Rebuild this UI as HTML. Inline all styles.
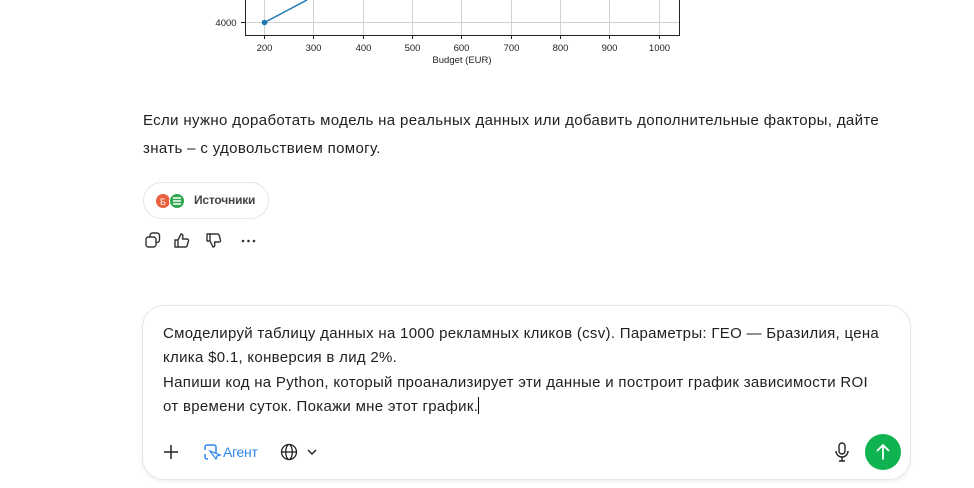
<!DOCTYPE html>
<html><head><meta charset="utf-8"><style>
body{margin:0;width:974px;height:488px;background:#fff;font-family:"Liberation Sans",sans-serif;color:#1f1f1f;position:relative;overflow:hidden}
.abs{position:absolute}
p.t{position:absolute;left:143px;top:107px;width:800px;margin:0;font-size:15px;line-height:28px;letter-spacing:0.35px;white-space:nowrap}
.src{position:absolute;left:143px;top:182px;width:126px;height:37px;border:1px solid #e6e6e6;border-radius:19px;box-sizing:border-box}
.box{position:absolute;left:142px;top:305px;width:769px;height:175px;border:1px solid #e5e5e5;border-radius:22px;box-sizing:border-box;box-shadow:0 2px 4px rgba(0,0,0,.06)}
.q{position:absolute;left:163px;top:322px;width:760px;font-size:15px;line-height:24.3px;letter-spacing:0.3px;margin:0;white-space:nowrap}
</style></head><body>
<svg class="abs" style="left:0;top:0" width="974" height="70">
<g stroke="#d0d0d0" stroke-width="1">
<line x1="264.5" y1="0" x2="264.5" y2="35"/><line x1="313.5" y1="0" x2="313.5" y2="35"/><line x1="363.5" y1="0" x2="363.5" y2="35"/><line x1="412.5" y1="0" x2="412.5" y2="35"/><line x1="461.5" y1="0" x2="461.5" y2="35"/><line x1="511.5" y1="0" x2="511.5" y2="35"/><line x1="560.5" y1="0" x2="560.5" y2="35"/><line x1="609.5" y1="0" x2="609.5" y2="35"/><line x1="659.5" y1="0" x2="659.5" y2="35"/>
<line x1="245" y1="22.5" x2="680" y2="22.5"/></g>
<path d="M245.5 0V35.5H679.5V0" fill="none" stroke="#222" stroke-width="1"/>
<g stroke="#222"><line x1="241" y1="22.5" x2="245" y2="22.5"/>
<line x1="264.5" y1="35" x2="264.5" y2="39"/><line x1="313.5" y1="35" x2="313.5" y2="39"/><line x1="363.5" y1="35" x2="363.5" y2="39"/><line x1="412.5" y1="35" x2="412.5" y2="39"/><line x1="461.5" y1="35" x2="461.5" y2="39"/><line x1="511.5" y1="35" x2="511.5" y2="39"/><line x1="560.5" y1="35" x2="560.5" y2="39"/><line x1="609.5" y1="35" x2="609.5" y2="39"/><line x1="659.5" y1="35" x2="659.5" y2="39"/></g>
<line x1="264.5" y1="22.5" x2="307" y2="0" stroke="#1f77b4" stroke-width="1.5"/>
<circle cx="264.5" cy="22.5" r="2.8" fill="#1f77b4"/>
<g font-family="Liberation Sans" font-size="9.5" fill="#222" text-anchor="middle">
<text x="226" y="26">4000</text>
<text x="264.5" y="51">200</text><text x="313.5" y="51">300</text><text x="363.5" y="51">400</text><text x="412.5" y="51">500</text><text x="461.5" y="51">600</text><text x="511.5" y="51">700</text><text x="560.5" y="51">800</text><text x="609.5" y="51">900</text><text x="659.5" y="51">1000</text>
<text x="462" y="63">Budget (EUR)</text></g>
</svg>
<p class="t">Если нужно доработать модель на реальных данных или добавить дополнительные факторы, дайте<br>знать – с удовольствием помогу.</p>
<div class="src">
<svg class="abs" style="left:10px;top:9px" width="36" height="18"><circle cx="9" cy="9" r="7" fill="#e8603c"/><text x="9" y="13" font-size="9" fill="#fff" text-anchor="middle" font-family="Liberation Sans">Б</text><circle cx="23" cy="9" r="7.5" fill="#2ea84f" stroke="#fff" stroke-width="1"/><path d="M19 6h8M19 9h8M19 12h8" stroke="#fff" stroke-width="1.5"/></svg>
<span class="abs" style="left:50px;top:10px;font-size:12px;color:#444;font-weight:bold;letter-spacing:-0.2px">Источники</span>
</div>
<svg class="abs" style="left:143px;top:231px" width="120" height="20" fill="none" stroke="#333" stroke-width="1.4" stroke-linejoin="round">
<rect x="3" y="6" width="10" height="10" rx="2.5"/><path d="M7 6V4.5A2.5 2.5 0 0 1 9.5 2H14a2.5 2.5 0 0 1 2.5 2.5V9A2.5 2.5 0 0 1 14 11.5h-1"/>
<path d="M35 9v7h-3V9zM35 9l3-6c1.5 0 2 1 1.8 2.5L39.5 8H44c1 0 1.8.9 1.5 2l-1.5 5c-.3.8-.9 1-1.6 1H35"/>
<path d="M67 10V3h-3v7zM67 10l3 6c1.5 0 2-1 1.8-2.5L71.5 11H76c1 0 1.8-.9 1.5-2L76 4c-.3-.8-.9-1-1.6-1H67"/>
<g fill="#333" stroke="none"><circle cx="100" cy="10" r="1.3"/><circle cx="105.5" cy="10" r="1.3"/><circle cx="111" cy="10" r="1.3"/></g>
</svg>
<div class="box"></div>
<p class="q">Смоделируй таблицу данных на 1000 рекламных кликов (csv). Параметры: ГЕО — Бразилия, цена<br>клика $0.1, конверсия в лид 2%.<br>Напиши код на Python, который проанализирует эти данные и построит график зависимости ROI<br>от времени суток. Покажи мне этот график.<span style="display:inline-block;width:1px;height:17px;background:#000;vertical-align:-3px"></span></p>
<svg class="abs" style="left:160px;top:442px" width="170" height="20" fill="none" stroke-width="1.5">
<path d="M11 3v14M4 10h14" stroke="#222"/>
<path d="M45 8V5a2 2 0 0 1 2-2h7a2 2 0 0 1 2 2v6M45 12v3a2 2 0 0 0 2 2h1" stroke="#2f86e8"/><path d="M50 9l6 8 1-3 3-1z" stroke="#2f86e8" stroke-width="1.2"/>
<circle cx="129" cy="10" r="7.5" stroke="#222" stroke-width="1.3"/><ellipse cx="129" cy="10" rx="3.3" ry="7.5" stroke="#222" stroke-width="1.3"/><path d="M121.5 10h15" stroke="#222" stroke-width="1.3"/>
<path d="M148 8l4 4 4-4" stroke="#222" stroke-width="1.4"/>
</svg>
<span class="abs" style="left:223px;top:444px;font-size:14px;color:#2f86e8;letter-spacing:-0.3px">Агент</span>
<svg class="abs" style="left:832px;top:441px" width="20" height="22" fill="none" stroke="#222" stroke-width="1.4"><rect x="7" y="2" width="6" height="11" rx="3"/><path d="M4 10a6 6 0 0 0 12 0M10 16v4M7 20h6"/></svg>
<div class="abs" style="left:865px;top:434px;width:36px;height:36px;border-radius:50%;background:#0fb350"></div>
<svg class="abs" style="left:865px;top:434px" width="36" height="36" fill="none" stroke="#fff" stroke-width="1.8" stroke-linecap="round" stroke-linejoin="round"><path d="M18 25V11M12.5 16.5L18 11l5.5 5.5"/></svg>
</body></html>
